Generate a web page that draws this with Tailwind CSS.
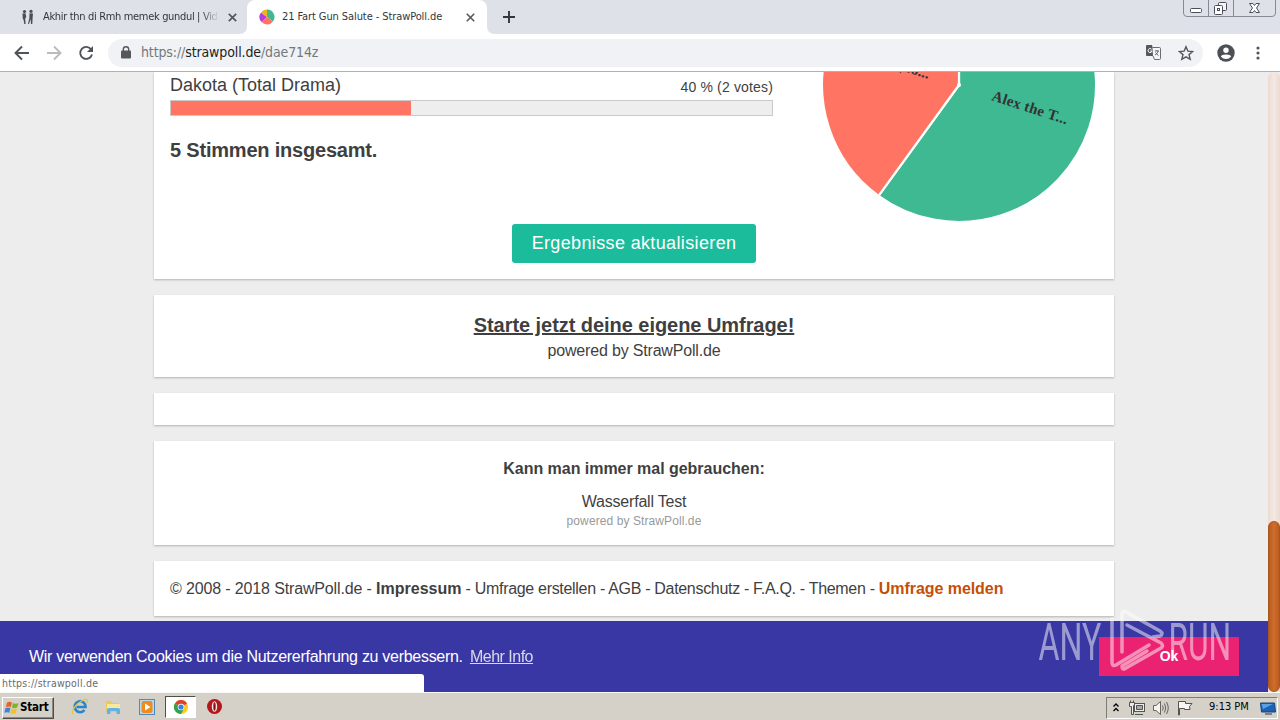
<!DOCTYPE html>
<html lang="de">
<head>
<meta charset="utf-8">
<title>21 Fart Gun Salute - StrawPoll.de</title>
<script src="https://cdn.jsdelivr.net/npm/@tailwindcss/browser@4"></script>
</head>
<body class="w-[1280px] h-[720px] overflow-hidden flex flex-col bg-white font-['Liberation_Sans',Arial,sans-serif] text-[#3f3f3f]">

<!-- Tab strip -->
<header class="relative h-[34px] shrink-0 flex bg-[#dee1e8] font-['DejaVu_Sans_Condensed','DejaVu_Sans',sans-serif] text-[11px] text-[#33363b]">
  <div class="w-[247px] flex items-center pl-5">
    <svg class="w-4 h-4 shrink-0" viewBox="0 0 16 16" fill="#4a4d52"><circle cx="4.500" cy="2.500" r="1.600"/><path d="M2.500 4.500 5.500 4.300 6.200 8 5.200 9.500 5.600 15H4.300L3.500 10.500 2.800 10z"/><circle cx="11" cy="2.300" r="1.600"/><path d="M9.500 4.200 13 4.500 12.600 9 12.300 15H11L10.600 10 9 15H8L9.400 9z"/></svg>
    <div class="ml-[7px] w-[176px] overflow-hidden whitespace-nowrap tracking-[-0.33px] [mask-image:linear-gradient(to_right,black_90%,transparent)]">Akhir thn di Rmh memek gundul | Video</div>
    <svg class="w-[9px] h-[9px] ml-[9px] shrink-0" viewBox="0 0 9 9" stroke="#54575c" stroke-width="1.700"><path d="M.8.8 8.200 8.200M8.200.8.8 8.200"/></svg>
  </div>
  <div class="relative w-[240px] flex items-center pl-3 bg-white rounded-t-lg">
    <svg class="w-4 h-4 shrink-0" viewBox="0 0 16 16"><path d="M8 8V.5A7.500 7.500 0 0 1 14 12.500z" fill="#3eb991"/><path d="M8 8 14 12.500A7.500 7.500 0 0 1 2.500 13z" fill="#ff7463"/><path d="M8 8 2.500 13A7.500 7.500 0 0 1 2 3.500z" fill="#b13fe0"/><path d="M8 8 2 3.500A7.500 7.500 0 0 1 8 .5z" fill="#f2b21b"/></svg>
    <div class="ml-[7px] w-[184px] whitespace-nowrap tracking-[-0.09px]">21 Fart Gun Salute - StrawPoll.de</div>
    <svg class="w-[9px] h-[9px] shrink-0" viewBox="0 0 9 9" stroke="#54575c" stroke-width="1.600"><path d="M.8.8 8.200 8.200M8.200.8.8 8.200"/></svg>
    <svg class="absolute -left-2 bottom-0 w-2 h-2" viewBox="0 0 8 8"><path d="M8 0V8H0Q8 8 8 0z" fill="#fff"/></svg>
    <svg class="absolute -right-2 bottom-0 w-2 h-2" viewBox="0 0 8 8"><path d="M0 0V8H8Q0 8 0 0z" fill="#fff"/></svg>
  </div>
  <div class="flex items-center pl-[16px]">
    <svg class="w-3 h-3" viewBox="0 0 12 12" stroke="#33363b" stroke-width="1.900"><path d="M6 0V12M0 6H12"/></svg>
  </div>
  <svg class="ml-auto mr-[3px] w-[94px] h-[17px]" viewBox="0 0 94 17" fill="none" stroke="#858a95"><path d="M.5 0V13Q.5 16.500 4 16.500H89Q92.500 16.500 92.500 13V0M25.500 0V16M50.500 0V16"/><g stroke="#4b4f58"><rect x="7.500" y="8.500" width="11" height="4" rx="1" fill="#fff"/><rect x="35.500" y="2.500" width="8" height="8" rx="1" fill="#f4f5f8"/><rect x="31.500" y="5.500" width="8" height="9" rx="1" fill="#fff"/><rect x="34.500" y="8.500" width="2" height="2"/><path d="M66.500 3.500H70L71.500 5.500 73 3.500H76.500L73.500 8 76.500 12.500H73L71.500 10.500 70 12.500H66.500L69.500 8z" fill="#fff"/></g></svg>
</header>

<!-- Toolbar -->
<div class="h-[38px] shrink-0 flex items-center border-b border-[#b0b2b0] bg-white pl-[13px]">
  <svg class="w-[84px] h-[18px]" viewBox="0 0 84 18" fill="none" stroke-width="1.900"><path d="M16 9H2.500M9 2.500 2.500 9 9 15.500" stroke="#505357"/><path d="M34 9H47.500M41 2.500 47.500 9 41 15.500" stroke="#b9bbbd"/><path d="M78.200 5.500A6 6 0 1 0 79 10.500" stroke="#505357"/><path d="M80 2V8H74z" fill="#505357"/></svg>
  <div class="ml-[11px] w-[1095px] h-7 rounded-full bg-[#f0f2f5] flex items-center pl-[13px]">
    <svg class="w-[10px] h-[13px]" viewBox="0 0 10 13"><rect y="4.500" width="10" height="8" rx="1" fill="#54575c"/><path d="M2.300 5V3.500A2.700 2.700 0 0 1 7.700 3.500V5" fill="none" stroke="#54575c" stroke-width="1.400"/></svg>
    <div class="ml-[10px] whitespace-nowrap font-['DejaVu_Sans_Condensed','DejaVu_Sans',sans-serif] text-[14px] tracking-[-0.12px] text-[#75787c]">https://<span class="text-[#1d1f22]">strawpoll.de</span>/dae714z</div>
    <svg class="ml-auto w-[15px] h-[15px]" viewBox="0 0 15 15"><path d="M1 0H6L9 11H1Q0 11 0 10V1Q0 0 1 0z" fill="#54575c"/><path d="M6.500 2.500H13.500Q14.500 2.500 14.500 3.500V13.500Q14.500 14.500 13.500 14.500H8.500L7 11" fill="#f4f5f7" stroke="#696c70"/><path d="M5.500 4.200A2 2 0 1 0 6 6H4.200" fill="none" stroke="#fff"/><path d="M8.800 6H13M11 5V6M12.300 6Q11.500 9 9 10M9.500 7.500Q11 9.500 12.500 10.500" fill="none" stroke="#696c70"/></svg>
    <svg class="ml-[17px] mr-[9px] w-4 h-4" viewBox="0 0 16 16" fill="none" stroke="#54575c" stroke-width="1.400"><path d="M8 1.700 9.900 6.100 14.700 6.500 11 9.600 12.200 14.300 8 11.800 3.800 14.300 5 9.600 1.300 6.500 6.100 6.100z"/></svg>
  </div>
  <svg class="ml-[14px] w-[18px] h-[18px]" viewBox="0 0 18 18"><circle cx="9" cy="9" r="8.700" fill="#4c4f54"/><circle cx="9" cy="6.300" r="2.700" fill="#fff"/><path d="M3.800 12.500Q4.500 10.400 9 10.400T14.200 12.500Q12 15 9 15T3.800 12.500z" fill="#fff"/></svg>
  <svg class="ml-[21px] w-1 h-[14px]" viewBox="0 0 4 14" fill="#54575c"><circle cx="2" cy="2" r="1.600"/><circle cx="2" cy="7" r="1.600"/><circle cx="2" cy="12" r="1.600"/></svg>
</div>

<!-- Page viewport -->
<div class="relative h-[620px] shrink-0 bg-[#ededed] overflow-hidden">
  <main class="w-[960px] ml-[154px] flex flex-col gap-4">
    <section class="h-[207px] bg-white shadow-[0_1px_2px_rgba(0,0,0,0.25)] flex flex-col items-center">
      <div class="w-full h-[152px] flex pl-4">
        <div class="w-[603px]">
          <div class="flex justify-between items-start h-[28px] whitespace-nowrap">
            <span class="text-[18px] leading-[26px]">Dakota (Total Drama)</span>
            <span class="text-[14px] leading-[31px] tracking-[0.16px]">40 % (2 votes)</span>
          </div>
          <div class="h-4 border border-[#c9c9c9] bg-[#eee]"><div class="h-full bg-[#ff7463]" style="width:40%"></div></div>
          <div class="mt-[20px] text-[20px] leading-[28px] font-bold tracking-[-0.2px]">5 Stimmen insgesamt.</div>
        </div>
        <svg class="ml-[48px] w-[278px] h-[152px]" viewBox="821 72 278 152">
          <g stroke="#fff" stroke-width="2.200" stroke-linejoin="round">
            <path d="M959 85V-52A137 137 0 1 1 878.500 195.800z" fill="#3eb991"/>
            <path d="M959 85 878.500 195.800A137 137 0 0 1 959 -52z" fill="#ff7463"/>
          </g>
          <circle cx="959" cy="85" r="2" fill="#fff"/>
          <g font-family="Liberation Serif, serif" font-weight="bold" font-size="15" fill="#333">
            <text transform="translate(991 100) rotate(18)" textLength="79">Alex the T...</text>
            <text transform="translate(928 79) rotate(18)" text-anchor="end">Dakota (To...</text>
          </g>
        </svg>
      </div>
      <button class="w-[244px] h-[39px] rounded-[3px] bg-[#1bbc9b] text-white text-[18px] tracking-[0.36px] whitespace-nowrap">Ergebnisse aktualisieren</button>
    </section>
    <section class="h-[82px] bg-white shadow-[0_1px_2px_rgba(0,0,0,0.25)] pt-[16px] text-center">
      <div class="text-[20px] leading-[28px] font-bold underline tracking-[-0.05px]">Starte jetzt deine eigene Umfrage!</div>
      <div class="text-[16px] leading-[23px] tracking-[-0.18px]">powered by StrawPoll.de</div>
    </section>
    <section class="h-8 bg-white shadow-[0_1px_2px_rgba(0,0,0,0.25)]"></section>
    <section class="h-[104px] bg-white shadow-[0_1px_2px_rgba(0,0,0,0.25)] pt-[16px] text-center">
      <div class="text-[16px] leading-[23px] font-bold tracking-[-0.03px]">Kann man immer mal gebrauchen:</div>
      <div class="mt-[10px] text-[16px] leading-[23px] tracking-[-0.2px]">Wasserfall Test</div>
      <div class="text-[12px] leading-[17px] text-[#999] tracking-[0.09px]">powered by StrawPoll.de</div>
    </section>
    <section class="h-[55px] bg-white shadow-[0_1px_2px_rgba(0,0,0,0.25)] px-4 flex items-center text-[16px] whitespace-nowrap">
      <p class="tracking-[-0.31px]"><span class="tracking-[-0.14px]">© 2008 - 2018 StrawPoll.de - </span><b class="tracking-normal">Impressum</b> - Umfrage erstellen - AGB - Datenschutz - F.A.Q. - Themen - <b class="text-[#c64f08] tracking-[-0.06px]">Umfrage melden</b></p>
    </section>
  </main>

  <!-- Cookie notice -->
  <div class="absolute left-0 bottom-0 w-[1268px] h-[71px] bg-[#3937a3] flex items-center justify-between pl-[29px] pr-[29px] text-white">
    <p class="text-[16px] whitespace-nowrap tracking-[-0.29px]">Wir verwenden Cookies um die Nutzererfahrung zu verbessern. <a class="ml-[3px] underline opacity-80 tracking-[-0.5px]">Mehr Info</a></p>
    <button class="w-[140px] h-[39px] bg-[#eb2272] text-[14px] font-bold">Ok</button>
  </div>
  <!-- Link status bubble -->
  <div class="absolute left-0 bottom-0 w-[424px] h-[18px] bg-white rounded-tr-[3px] pl-[2px] text-[10.500px] leading-[18px] tracking-[0.23px] text-[#6b6b6b] font-['DejaVu_Sans_Condensed','DejaVu_Sans',sans-serif]">https://strawpoll.de</div>
  <!-- Scrollbar -->
  <div class="absolute right-0 top-0 w-3 h-full rounded-t-md bg-linear-to-r from-[#edd9d1] via-[#f2eae3] to-[#edd9d1]"></div>
  <div class="absolute right-0 top-[449px] w-3 h-[171px] rounded-md border border-[#a6561f] bg-linear-to-r from-[#b95c20] via-[#cf6d2c] to-[#b95c20]"></div>
  <!-- Watermark -->
  <svg class="absolute left-[1036px] top-[536px] w-[200px] h-[70px]" viewBox="1036 608 200 70" fill="none" stroke="#fff" opacity=".5">
    <g font-family="Roboto, sans-serif" font-size="52" font-weight="400" fill="#fff" stroke="none">
      <text transform="translate(1038.500 659.500) scale(.64 1)" textLength="98" lengthAdjust="spacingAndGlyphs">ANY</text>
      <text transform="translate(1168.500 659.500) scale(.64 1)" textLength="98" lengthAdjust="spacingAndGlyphs">RUN</text>
    </g>
    <path stroke-width="3.500" stroke-linejoin="round" stroke-linecap="round" d="M1112 619V662Q1112 667 1116 665L1149 645M1122 652V614Q1122 610 1126 612L1160 631Q1164 634 1160 636L1153 637M1127 625 1161 643Q1164 646 1161 648L1126 668Q1122 671 1122 666L1147 651"/>
  </svg>
</div>

<!-- Taskbar -->
<footer class="h-[28px] shrink-0 bg-[#d5d1c9] border-t border-[#f8f8f5] flex items-center font-['DejaVu_Sans_Condensed','DejaVu_Sans',sans-serif] text-black">
  <button class="ml-[2px] mt-[2px] w-[52px] h-[22px] flex items-center border border-t-white border-l-white border-r-[#504e49] border-b-[#504e49] shadow-[inset_-1px_-1px_#8c8982] text-[11.500px] font-bold tracking-[-0.2px]">
    <svg class="w-4 h-4 ml-[1px] shrink-0" viewBox="0 0 16 16"><path d="M3 2.500Q5.500 1 8 2.500L6.800 7Q4.500 5.800 1.800 7z" fill="#e8632a"/><path d="M9 3Q11.500 4.300 14.500 3L13.200 7.500Q10.500 8.800 7.800 7.500z" fill="#7cb52f"/><path d="M1.500 8Q4 6.800 6.500 8L5.300 12.800Q3 11.500.3 12.800z" fill="#3b87d3"/><path d="M7.500 8.500Q10 9.800 13 8.500L11.700 13.200Q9 14.500 6.300 13.200z" fill="#f5c127"/></svg>Start</button>
  <svg class="ml-[17px] w-[18px] h-[18px]" viewBox="0 0 18 18" fill="none"><path d="M13.500 12A5.500 5.500 0 1 1 14.600 9H5.500" stroke="#2686cf" stroke-width="2.600"/><path d="M2 16Q-.5 13 6 6.500 14-.5 16.500 2 17 3 16 5" stroke="#e9c53d" stroke-width="1.300"/></svg>
  <svg class="ml-[15px] w-[18px] h-[18px]" viewBox="0 0 18 18"><path d="M2 3H7L8 5H15V14H2z" fill="#e8c95e"/><path d="M3 6H16V12H3z" fill="#f8e8a0"/><path d="M3 16V11.500Q3 10 5 10H14Q16 10 16 11.500V16H12.500V13H6.500V16z" fill="#63b2df"/></svg>
  <svg class="ml-[17px] w-4 h-4" viewBox="0 0 16 16"><rect x=".5" y=".5" width="15" height="15" fill="#b8d9f2" stroke="#4b8bc0"/><rect x="2.500" y="2" width="11" height="12" rx="2" fill="#f18a1c"/><path d="M6 4.500 11.500 8 6 11.500z" fill="#fff"/></svg>
  <div class="ml-[10px] w-[31px] h-[22px] bg-white border border-t-[#504e49] border-l-[#504e49] border-r-white border-b-white flex items-center justify-center">
    <svg class="w-[14px] h-[14px]" viewBox="0 0 14 14"><circle cx="7" cy="7" r="7" fill="#fbc922"/><path d="M7 7 .9 3.500A7 7 0 0 1 13.100 3.500z" fill="#e2402f"/><path d="M7 7 .9 3.500A7 7 0 0 0 7 14L10 8.500z" fill="#2ea351"/><circle cx="7" cy="7" r="3.300" fill="#fff"/><circle cx="7" cy="7" r="2.600" fill="#3e7ee8"/></svg>
  </div>
  <svg class="ml-[11px] w-[15px] h-[15px]" viewBox="0 0 15 15"><circle cx="7.500" cy="7.500" r="7.500" fill="#b3161b"/><ellipse cx="7.500" cy="7.500" rx="2.700" ry="5.300" fill="#f5e9e7"/><ellipse cx="7.500" cy="7.500" rx="1.200" ry="4.200" fill="#8a1014"/></svg>

  <div class="ml-auto mr-[2px] mt-[2px] w-[172px] h-[22px] border border-t-[#7f7c75] border-l-[#7f7c75] border-r-white border-b-white flex items-center">
    <svg class="ml-[6px] w-[6px] h-[9px] shrink-0" viewBox="0 0 6 9" fill="none" stroke="#000" stroke-width="1.300"><path d="M.5 3.500 3 1 5.500 3.500M.5 8 3 5.500 5.500 8"/></svg>
    <svg class="ml-[10px] w-4 h-4 shrink-0" viewBox="0 0 16 16" fill="#eee" stroke="#55544f"><rect x="5.500" y="3.500" width="10" height="8"/><path d="M7.500 5.500H13.500V9.500H7.500z" fill="#aaa"/><path d="M6 14.500H14" /><path d="M.5 2.500H5.500V5.500H4.500V14.500H2.500V6.500H.5zM1.500 2V.5M4.500 2V.5"/></svg>
    <svg class="ml-[8px] w-4 h-4 shrink-0" viewBox="0 0 16 16" fill="#f4f3f0" stroke="#66645f"><path d="M.5 5.500H3L7.500 1.500V14.500L3 10.500H.5z"/><path d="M9.500 5.500Q11 8 9.500 10.500M11.500 3.500Q14 8 11.500 12.500M13.500 2Q17 8 13.500 14" fill="none"/></svg>
    <svg class="ml-[8px] w-4 h-4 shrink-0" viewBox="0 0 16 16" fill="#f7f6f2" stroke="#55544f"><path d="M1.500 15V1.500H8.500V3.500H15L12.500 6.500 13 9.500H7.500V8.500H2.500V15z"/></svg>
    <span class="ml-[16px] text-[11px] whitespace-nowrap">9:13 PM</span>
    <svg class="ml-auto mr-[1px] w-4 h-[14px] shrink-0" viewBox="0 0 16 14"><path d="M.5 2H14.500L15.500 11H1.500z" fill="#1f62b5" stroke="#164579"/><path d="M1.500 3H13L3 8z" fill="#5aa2e2"/><path d="M5 13H12" stroke="#333"/></svg>
  </div>
</footer>
</body>
</html>
